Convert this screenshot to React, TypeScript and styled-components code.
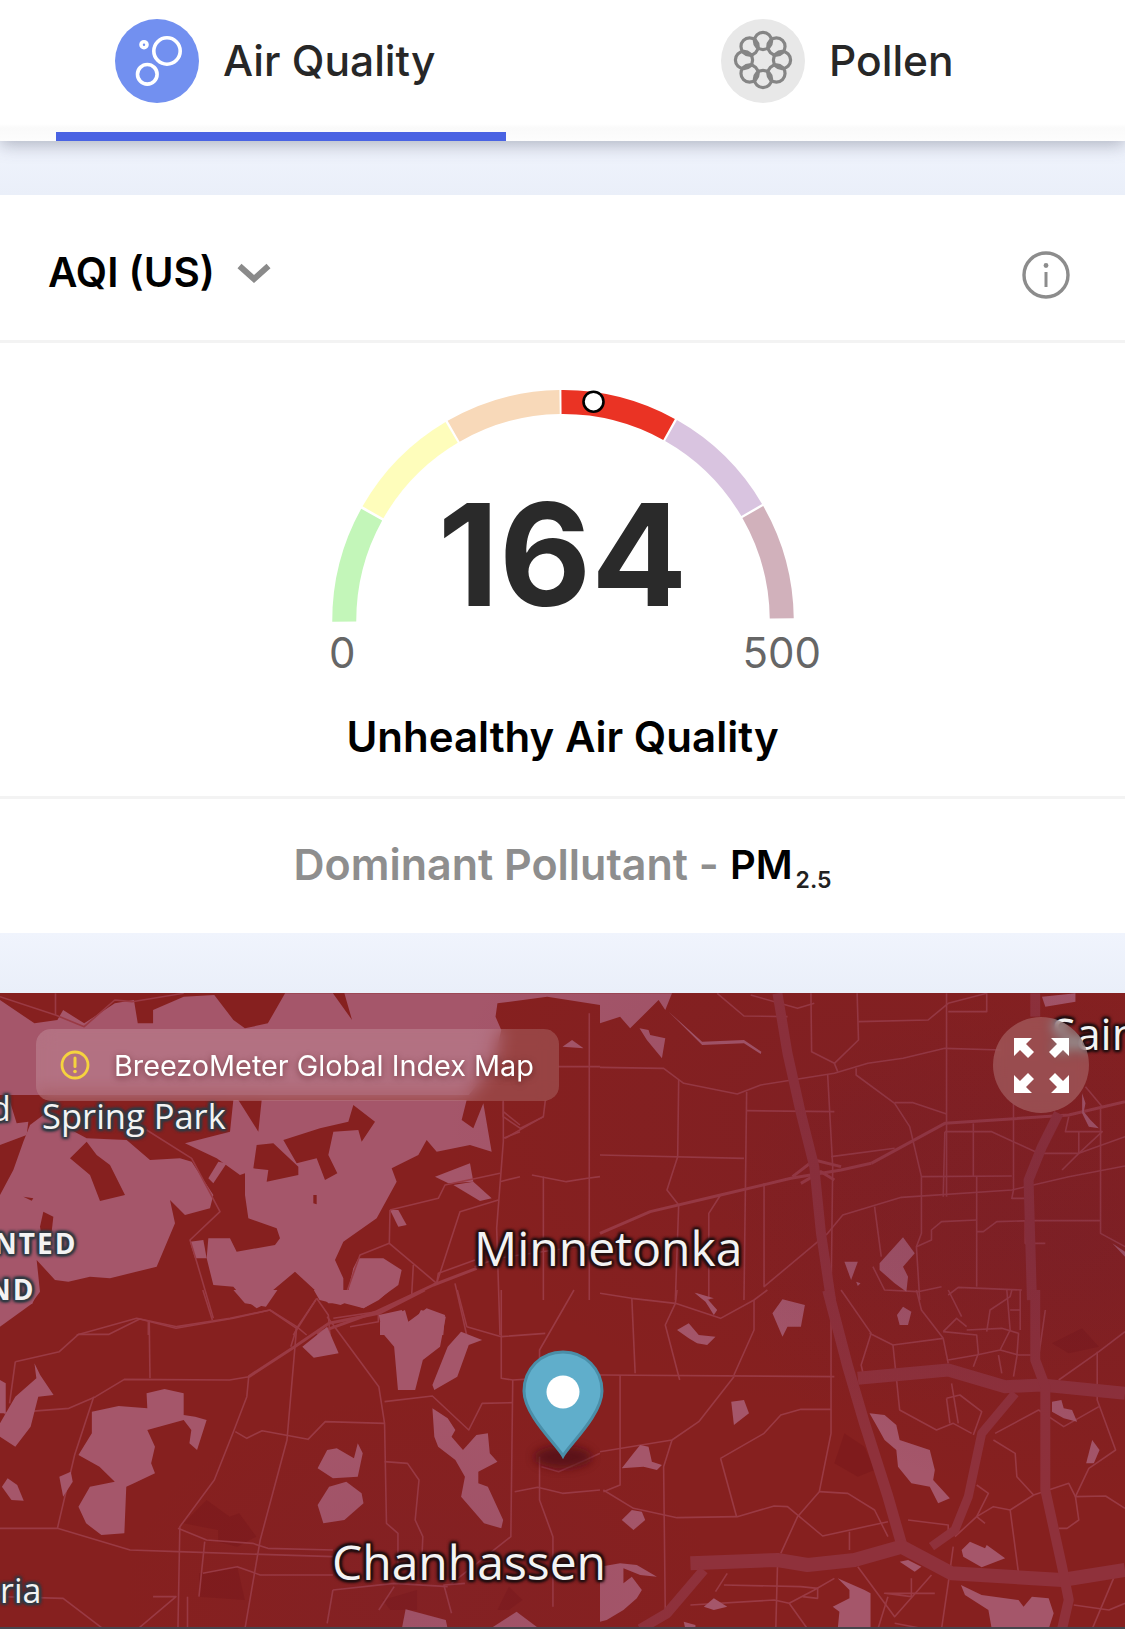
// App.tsx
import React from 'react';
import styled, { createGlobalStyle } from 'styled-components';

const GlobalStyle = createGlobalStyle`
  html, body {
    margin: 0;
    padding: 0;
    width: 1125px;
    height: 1629px;
    overflow: hidden;
    background: #fff;
    font-family: Inter, "Liberation Sans", sans-serif;
  }
`;

const Page = styled.div`
  width: 1125px;
  height: 1629px;
  display: flex;
  flex-direction: column;
  overflow: hidden;
  background: #eef2fb;
`;

const TabBar = styled.nav`
  position: relative;
  z-index: 2;
  height: 141px;
  flex: none;
  display: grid;
  grid-template-columns: 450px 1fr;
  padding-left: 56px;
  background: linear-gradient(#fff 0, #fff 124px, #fafafa 128px, #fdfdfd 141px);
  box-shadow: 0 4px 16px rgba(70, 76, 100, 0.38);
`;

const Tab = styled.div<{ $active?: boolean }>`
  display: flex;
  align-items: flex-start;
  gap: 24px;
  padding: 19px 0 0 ${props => (props.$active ? '59px' : '215px')};
  box-sizing: border-box;
  border-bottom: 9px solid ${props => (props.$active ? '#4a63e3' : 'transparent')};
`;

const TabIcon = styled.span<{ $active?: boolean }>`
  width: 84px;
  height: 84px;
  flex: none;
  border-radius: 50%;
  display: block;
  background: ${props => (props.$active ? '#7290f0' : '#e8e8e8')};
`;

const TabLabel = styled.span`
  font-size: 42.5px;
  line-height: 84px;
  font-weight: 500;
  color: #272727;
`;

const Gap = styled.div<{ $height: number }>`
  height: ${props => props.$height}px;
  flex: none;
  background: linear-gradient(#f0f4fd, #eaeff9);
`;

const Card = styled.section`
  flex: none;
  background: #fff;
`;

const AqiRow = styled.div`
  height: 145px;
  box-sizing: content-box;
  display: flex;
  align-items: center;
  justify-content: space-between;
  padding: 0 55px 0 48px;
  border-bottom: 3px solid #f3f3f3;
`;

const AqiSelect = styled.div`
  display: flex;
  align-items: center;
  gap: 22px;
  margin-top: 10px;
`;

const AqiTitle = styled.span`
  font-size: 40.5px;
  font-weight: 600;
  color: #000;
`;

const InfoSlot = styled.div`
  display: flex;
  margin-top: 15px;
`;

const GaugeSection = styled.div`
  height: 456px;
  padding-top: 42px;
  box-sizing: border-box;
  display: flex;
  flex-direction: column;
  align-items: center;
  border-bottom: 3px solid #f3f3f3;
`;

const GaugeWrap = styled.div`
  position: relative;
  width: 500px;
  height: 238px;
`;

const GaugeValue = styled.div`
  position: absolute;
  left: 0;
  right: 0;
  top: 98px;
  text-align: center;
  font-size: 142px;
  line-height: 142px;
  font-weight: 700;
  letter-spacing: 0;
  color: #2a2a2a;
`;

const ScaleRow = styled.div`
  width: 492px;
  margin: 7px 0 0 25px;
  display: flex;
  justify-content: space-between;
  font-size: 42px;
  line-height: 46px;
  font-weight: 400;
  color: #666;
`;

const Status = styled.div`
  margin-top: 36px;
  font-size: 42px;
  line-height: 50px;
  font-weight: 600;
  color: #000;
`;

const PollutantRow = styled.div`
  height: 134px;
  box-sizing: border-box;
  padding-bottom: 4px;
  display: flex;
  align-items: center;
  justify-content: center;
  font-size: 43px;
  font-weight: 600;
  color: #8e8e8e;
  white-space: pre;
`;

const PollutantName = styled.span`
  font-size: 40px;
  color: #000;
  margin-left: 11px;
`;

const PollutantSub = styled.span`
  font-size: 23px;
  color: #222;
  margin: 32px 0 0 3px;
`;

const MapArea = styled.div`
  position: relative;
  height: 634px;
  flex: none;
  overflow: hidden;
  background: #86201f;
`;

const MapSvg = styled.svg`
  display: block;
  polyline, polygon {
    vector-effect: non-scaling-stroke;
  }
`;

const BaseMapLayer = styled.div`
  position: absolute;
  inset: 0;
  &::after {
    content: '';
    position: absolute;
    inset: 0;
    background:
      radial-gradient(ellipse 420px 300px at 860px 120px, rgba(90, 30, 60, 0.14), transparent),
      radial-gradient(ellipse 360px 260px at 1080px 250px, rgba(90, 30, 60, 0.18), transparent),
      radial-gradient(ellipse 300px 200px at 420px 600px, rgba(110, 40, 70, 0.12), transparent);
  }
`;

const MapLabel = styled.div<{ $x: number; $y: number; $size: number; $bold?: boolean; $halo?: string }>`
  position: absolute;
  left: ${props => props.$x}px;
  top: ${props => props.$y}px;
  font-family: "Open Sans", "Noto Sans", sans-serif;
  font-size: ${props => props.$size}px;
  line-height: 1;
  font-weight: ${props => (props.$bold ? 700 : 400)};
  letter-spacing: ${props => (props.$bold ? '2px' : '0')};
  color: #f3f3f3;
  white-space: nowrap;
  text-shadow:
    2px 0 2px ${props => props.$halo || '#241012'},
    -2px 0 2px ${props => props.$halo || '#241012'},
    0 2px 2px ${props => props.$halo || '#241012'},
    0 -2px 2px ${props => props.$halo || '#241012'},
    2px 2px 3px ${props => props.$halo || '#241012'},
    -2px -2px 3px ${props => props.$halo || '#241012'},
    2px -2px 3px ${props => props.$halo || '#241012'},
    -2px 2px 3px ${props => props.$halo || '#241012'};
`;

const IndexBadge = styled.div`
  position: absolute;
  left: 36px;
  top: 36px;
  width: 523px;
  height: 72px;
  box-sizing: border-box;
  display: flex;
  align-items: center;
  gap: 24px;
  padding-left: 24px;
  border-radius: 15px;
  background: rgba(255, 255, 255, 0.16);
  backdrop-filter: blur(9px);
  font-size: 28.8px;
  font-weight: 400;
  color: #fff;
  text-shadow: 0 2px 6px rgba(60, 10, 10, 0.55);
`;

const FullscreenButton = styled.div`
  position: absolute;
  left: 993px;
  top: 24px;
  width: 96px;
  height: 96px;
  border-radius: 50%;
  display: flex;
  align-items: center;
  justify-content: center;
  background: rgba(255, 255, 255, 0.2);
  backdrop-filter: blur(6px);
`;

const PinWrap = styled.div`
  position: absolute;
  left: 513px;
  top: 358px;
`;

const BottomEdge = styled.div`
  flex: 1;
  background: #47474f;
`;

// gauge geometry, measured from the reference
const CX = 250;
const CY = 235.7;
const R = 218.75;

const arcPath = (fromDeg: number, toDeg: number) => {
  const pt = (deg: number) => {
    const a = (deg * Math.PI) / 180;
    return `${(CX - R * Math.cos(a)).toFixed(2)} ${(CY - R * Math.sin(a)).toFixed(2)}`;
  };
  return `M${pt(fromDeg)} A${R} ${R} 0 0 1 ${pt(toDeg)}`;
};

const segments = [
  { from: -0.25, to: 29, color: '#c3f6b9' },
  { from: 29.7, to: 59.4, color: '#fefdbb' },
  { from: 60, to: 89.1, color: '#f8d9b9' },
  { from: 89.6, to: 119, color: '#ea3324' },
  { from: 119.6, to: 149.6, color: '#d9c4e0' },
  { from: 150.2, to: 179.4, color: '#d1b1bb' },
];

const Gauge = () => (
  <svg width="500" height="238" viewBox="0 0 500 238">
    {segments.map(s => (
      <path key={s.from} d={arcPath(s.from, s.to)} fill="none" stroke={s.color} strokeWidth="24" />
    ))}
    <circle cx="280.5" cy="16.7" r="10" fill="#fff" stroke="#000" strokeWidth="2.6" />
  </svg>
);

const BubblesIcon = () => (
  <svg width="84" height="84" viewBox="0 0 84 84" fill="none" stroke="#fff" strokeWidth="3.6">
    <circle cx="52" cy="32" r="13.2" />
    <circle cx="32.3" cy="55.3" r="9.8" />
    <circle cx="29" cy="25.7" r="3" />
  </svg>
);

const PollenIcon = () => (
  <svg width="84" height="84" viewBox="0 0 84 84" fill="none" stroke="#858585" strokeWidth="3.2">
    {[0, 45, 90, 135, 180, 225, 270, 315].map(a => (
      <circle key={a} cx="42" cy="22" r="8.6" transform={`rotate(${a} 42 41)`} />
    ))}
  </svg>
);

const InfoIcon = () => (
  <svg width="48" height="48" viewBox="0 0 48 48" fill="none" stroke="#8c8c8c">
    <circle cx="24" cy="24" r="22" strokeWidth="3.4" />
    <circle cx="24" cy="14.5" r="2.4" fill="#8c8c8c" stroke="none" />
    <path d="M24 21v15" strokeWidth="3" />
  </svg>
);

const ChevronIcon = () => (
  <svg width="34" height="20" viewBox="0 0 34 20" fill="none" stroke="#8a8a8a" strokeWidth="6">
    <path d="M2.5 3L17 16L31.5 3" />
  </svg>
);

const WarnIcon = () => (
  <svg width="30" height="30" viewBox="0 0 30 30" fill="none" stroke="#f5d33f">
    <circle cx="15" cy="15" r="13" strokeWidth="2.8" />
    <path d="M15 8v8.5" strokeWidth="3" strokeLinecap="round" />
    <circle cx="15" cy="21.5" r="1.8" fill="#f5d33f" stroke="none" />
  </svg>
);

const ExpandIcon = () => (
  <svg width="55" height="55" viewBox="0 0 55 55" fill="#fff">
    {[0, 90, 180, 270].map(a => (
      <path key={a} d="M0 0H18L12 6L20 14L14 20L6 12L0 18Z" transform={`rotate(${a} 27.5 27.5)`} />
    ))}
  </svg>
);

const Pin = () => (
  <svg width="100" height="130" viewBox="0 0 100 130" style={{ overflow: 'visible' }}>
    <defs>
      <filter id="pin-blur" x="-50%" y="-100%" width="200%" height="300%">
        <feGaussianBlur stdDeviation="5" />
      </filter>
    </defs>
    <ellipse cx="50" cy="106" rx="29" ry="11" fill="#4d0f12" opacity="0.75" filter="url(#pin-blur)" />
    <path
      d="M50 105C44 94 11 64 11 40C11 18 28 1 50 1C72 1 89 18 89 40C89 64 56 94 50 105Z"
      fill="#60aecb"
      stroke="#4a8ea8"
      strokeWidth="3"
    />
    <circle cx="50" cy="41" r="16.5" fill="#fff" />
  </svg>
);

// map data: [x y] in crop space per quadrant, scaled by the <g> transforms below
const PINK = '#a5566a';
const ROAD = '#9a3a44';
const HIGHWAY = '#8f313b';
const BG = '#86201f';

// top strip of the map, behind the badge
const q1Pink = [
  '0,60 90,130 150,120 165,90 220,130 300,70 350,60 360,130 400,130 400,90 480,50 560,45 610,120 640,145 700,130 745,40 870,40 920,120 900,40 1568,40 1568,75 1430,50 1300,70 1295,110 1310,150 1290,250 1225,345 0,345',
  '1470,200 1495,180 1525,205',
];

const q1Roads = [
  '0,50 145,105 220,140 300,60 345,65 480,40',
  '145,40 145,105',
  '1315,362 1315,410 1360,445 1420,410 1425,362',
  '1320,475 1420,410',
  '1540,100 1540,960',
  '1460,260 1568,260',
  '1390,585 1480,605 1535,595 1568,590',
  '1420,590 1420,960',
  '1240,860 1300,835 1568,790',
];

// lakes below the badge, 3x crop starting at y 1095
const lakePink = [
  '0,20 30,20 50,85 85,80 80,120 0,150',
  '130,60 260,130 380,135 450,195 540,190 575,200 640,300 630,340 555,360 510,315 525,385 470,515 330,550 270,545 205,560 165,555 110,495 120,590 95,625 30,650 0,690 0,300 40,225 70,140 90,90',
  '785,15 1400,15 1385,75 1420,100 1450,25 1475,170 1410,150 1310,170 1280,135 1255,180 1175,220 1190,260 1130,370 1030,440 1005,495 1030,550 1030,625 985,625 950,590 885,530 790,610 800,625 770,640 730,610 700,575 640,570 620,490 625,430 690,430 710,470 825,450 840,430 830,400 745,370 735,300 735,235 720,240 650,190 555,145 690,110 700,15 715,15 775,110',
  '1305,245 1410,205 1420,260 1345,265',
  '1360,270 1420,260 1475,310 1440,318',
  '1170,345 1195,345 1220,390 1195,395',
  '1075,490 1150,490 1205,525 1195,570 1140,610 1090,640 1040,620 1050,560 1060,520',
  '1140,680 1215,645 1225,680 1280,640 1335,660 1330,720 1140,720',
  '570,440 610,435 620,490 585,490',
  '625,250 655,200 680,205 640,265',
];

const lakeHoles = [
  '850,135 960,100 1045,80 1060,30 1125,80 1085,140 1075,105 1000,110 985,180 1012,235 975,255 950,190 890,205',
  '770,150 820,145 895,215 895,240 800,260 805,225 760,220',
  '210,190 260,140 290,180 330,210 375,300 300,318 270,240',
  '120,395 130,350 160,365 155,410 130,450',
  '70,305 100,310 95,317',
  '940,300 950,300 950,328 940,325',
];

const lakeRoads = [
  '440,105 575,190 660,350 570,435 590,500 640,670',
  '1170,345 1315,310 1335,270 1500,235',
  '1170,345 1168,445 1310,565 1380,350 1495,315',
  '1168,445 1080,480 1030,620',
  '1240,510 1235,600',
  '1310,565 1315,535 1425,495',
  '1510,20 1510,140 1490,400 1500,720',
  '950,610 880,720',
  '230,720 410,670 530,695 690,670 810,645 890,695 920,720',
  '445,680 445,720',
  '1000,670 1135,650 1135,680 1050,695',
  '950,610 985,660 990,720',
  '1365,565 1400,720',
  '1510,130 1560,110',
  '1510,50 1560,90',
  '1500,260 1560,245',
];

const lakeMedium = ['950,715 1130,650 1300,570 1430,520'];

const q2Pink = [
  '0,40 215,40 195,90 175,60 90,145 60,110 0,130',
  '205,95 305,185 430,180 482,215 480,222 430,190 305,195',
  '118,145 145,150 150,165 195,175 185,235 140,180',
  '1320,50 1420,40 1420,65 1330,80',
  '835,850 905,772 940,820 905,860 920,890 915,935 880,910 835,870',
  '730,845 770,845 750,900',
  '765,905 778,910 770,918',
  '285,938 340,955 310,960',
  '1530,790 1568,815 1568,830',
  '1440,340 1450,370 1445,395 1465,420 1490,445 1460,440 1440,400',
];

const q2Roads = [
  '350,40 430,108 560,110',
  '450,45 590,85 640,70',
  '630,40 632,215 700,250 772,180 768,40',
  '772,125 980,120 1040,70 1155,40',
  '1035,40 1035,650',
  '1040,95 1155,95 1155,40',
  '700,250 710,275',
  '0,262 190,265 250,310 410,342 480,315 700,280 800,250 905,235 1030,205 1200,210',
  '235,300 232,530 200,630 235,675 225,960',
  '438,335 430,960',
  '438,392 700,395',
  '680,285 695,560 690,960',
  '0,525 430,535',
  '765,265 765,285 880,370 925,440 960,590 960,760 945,800 955,960',
  '880,368 935,368 1035,402',
  '690,530 880,505',
  '360,645 325,700 325,960',
  '490,610 490,920 680,760 725,705 900,652 1230,630 1400,590 1568,558',
  '960,590 1230,588',
  '1030,455 1170,455 1310,520 1430,520',
  '1115,430 1115,590',
  '1025,650 1030,455',
  '1125,590 1125,920',
  '820,680 840,830',
  '945,800 990,780 990,750 1020,725 1125,720',
  '1125,755 1145,755 1185,725 1290,722 1495,722',
  '815,860 850,930 950,935 1020,920',
  '1040,945 1070,922 1260,930',
  '1235,340 1235,630 1230,655 1285,655',
  '1495,385 1495,760 1568,800',
  '1400,410 1390,455 1500,455 1430,520 1380,570',
  '1430,455 1430,520',
  '1270,722 1270,790 1330,790',
  '1450,320 1500,380',
  '1430,520 1568,470',
];

const q2Medium = [
  '810,550 1030,430 1400,405 1568,365',
  '0,760 150,695 360,645 570,595 720,570 810,550',
  '575,590 640,540 720,560',
  '600,610 660,575 700,600',
];

const q2Highways = [
  '530,40 560,220 600,400 640,560 660,760 690,960',
  '1370,400 1320,500 1280,600 1290,960',
  '1300,40 1300,110',
];

const q3Pink = [
  '610,0 725,0 695,50 640,40',
  '820,0 1020,0 990,30 950,55 900,40 890,45 835,30',
  '0,0 100,0 85,40 0,110',
  '990,75 1050,60 1075,120 1100,60 1165,80 1150,170 1105,210 1085,300 1040,300 1030,170 1000,130',
  '1205,125 1260,150 1225,165 1195,260 1135,300 1130,285 1170,170',
  '790,170 855,110 885,190 820,203',
  '90,220 105,255 140,315 100,320 80,410 40,470 0,440 0,400 40,320 95,265',
  '0,270 15,280 15,370 0,370',
  '240,365 310,348 385,355 383,310 430,297 480,310 480,375 510,380 540,390 515,480 495,460 500,420 480,390 385,420 405,470 395,520 405,550 350,580 330,590 325,730 265,735 225,700 205,650 235,590 300,575 260,530 205,495 240,430',
  '155,560 185,545 190,575 165,620',
  '20,565 45,585 62,632 30,630 5,590',
  '855,480 880,475 925,505 935,460 948,490 935,560 870,565 830,535',
  '830,645 860,590 905,575 945,610 950,640 900,690 845,700',
  '1130,355 1170,385 1190,420 1180,440 1210,480 1245,435 1275,430 1280,490 1300,515 1250,545 1250,580 1275,590 1315,690 1310,715 1265,700 1205,620 1215,560 1190,510 1145,470 1135,440',
  '1050,1017 1060,958 1165,990 1170,1017',
  '1280,1017 1350,965 1410,1017',
];

const q3Patches = [
  '480,700 540,630 600,680 625,670 670,740 620,770 570,755 570,720',
  '520,850 620,830 640,930 520,920',
  '1000,930 1090,900 1090,960 1020,960',
  '1300,960 1330,890 1365,930 1330,960',
];

const q3Roads = [
  '530,0 555,90',
  '825,30 775,115 760,170',
  '40,215 155,185 205,133 285,133 365,87 460,115 610,85 705,60 775,115',
  '40,215 25,340',
  '390,95 392,265',
  '10,370 180,355 250,320 325,268 600,270 650,260 645,320 610,425 560,570 470,710 465,1017',
  '245,320 195,495 150,715 0,715',
  '150,715 340,780 465,785 870,800',
  '855,80 990,290 1005,400 1010,700 1040,730 1040,830',
  '775,115 750,450 680,750 640,1017',
  '615,425 645,445 685,422 805,448 850,395 1005,400',
  '1005,335 1130,318 1225,420 1260,340 1340,338',
  '1005,515 1065,520 1095,570 1085,690 1105,740 1100,870',
  '465,715 540,750 660,760 700,775 870,780',
  '530,850 620,830 680,855 870,855',
  '535,755 520,920',
  '870,900 1030,880 1170,890',
  '990,960 1030,890',
  '855,1000 870,900',
  '1215,880 1160,885 1180,970',
  '1195,0 1220,110 1310,140 1425,130',
  '1310,0 1310,265 1340,270 1410,265 1410,180 1500,0',
  '1340,270 1335,740 1180,880',
  '1410,500 1410,630 1445,740 1445,950',
  '1415,530 1460,545 1530,510 1568,490',
  '1345,605 1405,592 1470,610 1568,600',
  '400,920 460,920 360,1017',
  '0,920 165,925 270,1017',
  '490,920 490,1017',
];

const q3Medium = ['650,260 770,170 860,100 990,70 1110,0'];

const q4Pink = [
  '282,8 315,20 350,60 340,75 315,35',
  '545,28 612,45 600,110 560,110 545,140 515,70',
  '905,50 930,65 920,105 895,105 887,75',
  '230,120 265,100 295,135 345,140 320,165 290,160 265,145',
  '392,335 430,330 445,370 400,405',
  '805,370 850,375 885,405 895,450 985,480 1000,540 995,570 1045,625 1010,640 985,590 930,580 890,530 885,480 850,450 825,405',
  '1350,335 1378,330 1385,355 1410,360 1425,395 1385,385 1350,365',
  '1470,450 1492,480 1475,520 1452,520',
  '120,465 145,470 155,515 185,525 170,540 130,530 65,535 100,490',
  '65,690 95,660 125,665 135,690 100,720',
  '1105,755 1150,775 1155,765 1210,805 1140,832 1085,800 1080,780',
  '895,815 920,810 960,830 940,845',
  '340,925 380,950 340,960 310,950',
  '710,865 790,900 808,910 808,1017 710,1017 715,965 695,950 745,925 745,900',
  '1078,885 1140,915 1250,930 1265,950 1290,920 1340,925 1355,970 1340,1017 1170,1017 1160,960 1090,915',
  '0,830 60,820 110,825 170,860 120,855 70,835 70,880 95,860 125,900 110,925 70,960 20,990 0,995',
  '250,995 285,1005 285,1017 255,1017',
];

const q4Patches = ['700,520 730,430 790,470 820,540 770,560', '1350,160 1440,115 1490,170 1400,190'];

const q4Roads = [
  '0,255 700,260',
  '60,255 60,585 10,605',
  '95,25 105,250',
  '0,10 95,25 225,40 360,85 460,30 500,0',
  '225,40 195,105 238,270',
  '460,30 460,120 400,255',
  '230,0 225,40',
  '400,260 295,395 215,450 0,485',
  '215,450 190,530 195,970',
  '10,600 100,655 230,683 410,680 520,648 560,650 665,738 860,695',
  '360,505 490,430 540,375 600,358 690,358 690,60',
  '360,505 408,680',
  '690,358 690,430 655,605 590,680 540,790',
  '655,605 740,610 820,660 860,740',
  '745,725 745,780',
  '920,690 1040,705 1040,740',
  '805,130 875,165 1025,145 960,60 945,0',
  '875,165 895,360 1005,420 1055,400 1110,430',
  '810,130 780,225 790,270',
  '720,0 810,130',
  '1035,325 1075,315 1140,365 1115,435',
  '1035,325 1045,400',
  '1050,280 1070,400',
  '1025,145 1040,220',
  '1025,125 1065,85 1095,110',
  '1040,0 1080,80',
  '1025,125 1125,135 1130,190 1115,230',
  '1095,120 1200,115 1250,130 1245,200 1235,260',
  '1155,125 1165,60 1225,20 1230,0',
  '1215,0 1225,120 1195,180 1125,195 1040,210',
  '1195,180 1250,195 1300,195',
  '1190,195 1200,250',
  '1255,0 1255,120',
  '1225,60 1255,60',
  '1330,60 1310,200',
  '1370,270 1490,185 1568,125',
  '1485,185 1485,330 1540,480 1460,535 1420,620 1510,618 1568,655',
  '1180,430 1310,360 1385,410 1490,350',
  '1175,450 1240,490 1245,560 1295,615 1400,580 1420,620 1430,690 1395,715 1370,715',
  '1295,615 1225,660 1250,850',
  '1225,660 1175,650 1125,680 1150,700',
  '1125,585 1160,610 1125,680 1060,740',
  '1540,850 1470,1017',
  '1415,945 1520,960 1568,940',
  '530,830 525,1017',
  '380,850 345,905',
  '370,885 600,890 650,895 650,925 605,920',
  '270,945 520,930 565,940 640,900 700,865',
  '565,940 620,1017',
  '770,830 880,980 990,855',
  '930,865 930,920 850,910 1000,910',
  '1055,770 1040,880 1020,1017',
  '880,1000 970,1017',
  '830,1017 860,920',
];

const q4Highways: [string, number][] = [
  ['680,0 740,230 790,400 860,620 900,760', 11],
  ['770,265 1040,240 1210,290 1320,285 1568,310', 13],
  ['270,820 530,810 620,825 760,810 900,770 1050,850 1380,870 1568,840', 14],
  ['1300,0 1300,210 1330,290 1330,600 1380,830 1400,930 1380,1017', 10],
  ['1240,310 1140,430 1100,620 1060,720 990,770', 9],
  ['310,840 200,970 120,1017', 10],
];

const Polys = ({ items, fill, opacity }: { items: string[]; fill: string; opacity?: number }) => (
  <>
    {items.map(p => (
      <polygon key={p} points={p} fill={fill} opacity={opacity} />
    ))}
  </>
);

const Lines = ({ items, width, color = ROAD }: { items: string[]; width: number; color?: string }) => (
  <g fill="none" stroke={color} strokeWidth={width} strokeLinejoin="round">
    {items.map(p => (
      <polyline key={p} points={p} />
    ))}
  </g>
);

const BaseMap = () => (
  <MapSvg width="1125" height="634" viewBox="0 993 1125 634">
    <g transform="translate(0 980) scale(0.38265 0.33333)">
      <Polys items={q1Pink} fill={PINK} />
      <Lines items={q1Roads} width={1.6} />
    </g>
    <g transform="translate(0 1095) scale(0.33333)">
      <Polys items={lakePink} fill={PINK} />
      <Polys items={lakeHoles} fill={BG} />
      <Lines items={lakeRoads} width={1.6} />
      <Lines items={lakeMedium} width={3} />
    </g>
    <g transform="translate(600 980) scale(0.33482 0.33333)">
      <Lines items={q2Roads} width={1.6} />
      <Lines items={q2Medium} width={3} />
      <Lines items={q2Highways} width={10} color={HIGHWAY} />
      <Polys items={q2Pink} fill={PINK} />
    </g>
    <g transform="translate(0 1290) scale(0.38265 0.33333)">
      <Polys items={q3Patches} fill="#7c1a1b" opacity={0.7} />
      <Lines items={q3Roads} width={1.6} />
      <Lines items={q3Medium} width={3} />
      <Polys items={q3Pink} fill={PINK} />
    </g>
    <g transform="translate(600 1290) scale(0.33482 0.33333)">
      <Polys items={q4Patches} fill="#7c1a1b" opacity={0.7} />
      <Lines items={q4Roads} width={1.6} />
      {q4Highways.map(([p, w]) => (
        <Lines key={p} items={[p]} width={w} color={HIGHWAY} />
      ))}
      <Polys items={q4Pink} fill={PINK} />
    </g>
  </MapSvg>
);

export default function App() {
  return (
    <Page>
      <GlobalStyle />
      <TabBar>
        <Tab $active>
          <TabIcon $active>
            <BubblesIcon />
          </TabIcon>
          <TabLabel>Air Quality</TabLabel>
        </Tab>
        <Tab>
          <TabIcon>
            <PollenIcon />
          </TabIcon>
          <TabLabel>Pollen</TabLabel>
        </Tab>
      </TabBar>
      <Gap $height={54} />
      <Card>
        <AqiRow>
          <AqiSelect>
            <AqiTitle>AQI (US)</AqiTitle>
            <ChevronIcon />
          </AqiSelect>
          <InfoSlot>
            <InfoIcon />
          </InfoSlot>
        </AqiRow>
        <GaugeSection>
          <GaugeWrap>
            <Gauge />
            <GaugeValue>164</GaugeValue>
          </GaugeWrap>
          <ScaleRow>
            <span>0</span>
            <span>500</span>
          </ScaleRow>
          <Status>Unhealthy Air Quality</Status>
        </GaugeSection>
        <PollutantRow>
          Dominant Pollutant -<PollutantName>PM</PollutantName>
          <PollutantSub>2.5</PollutantSub>
        </PollutantRow>
      </Card>
      <Gap $height={60} />
      <MapArea>
        <BaseMapLayer>
          <BaseMap />
        </BaseMapLayer>
        <MapLabel $x={42} $y={106} $size={34.5} $halo="#333b44">Spring Park</MapLabel>
        <MapLabel $x={-10} $y={98} $size={34} $halo="#333b44">d</MapLabel>
        <MapLabel $x={-6} $y={236} $size={28} $bold $halo="#333b44">NTED</MapLabel>
        <MapLabel $x={-12} $y={282} $size={28} $bold $halo="#333b44">ND</MapLabel>
        <MapLabel $x={474} $y={231} $size={48}>Minnetonka</MapLabel>
        <MapLabel $x={332} $y={545} $size={48}>Chanhassen</MapLabel>
        <MapLabel $x={0} $y={580} $size={34} $halo="#333b44">ria</MapLabel>
        <MapLabel $x={1052} $y={18} $size={44}>Saint</MapLabel>
        <IndexBadge>
          <WarnIcon />
          <span>BreezoMeter Global Index Map</span>
        </IndexBadge>
        <FullscreenButton>
          <ExpandIcon />
        </FullscreenButton>
        <PinWrap>
          <Pin />
        </PinWrap>
      </MapArea>
      <BottomEdge />
    </Page>
  );
}
